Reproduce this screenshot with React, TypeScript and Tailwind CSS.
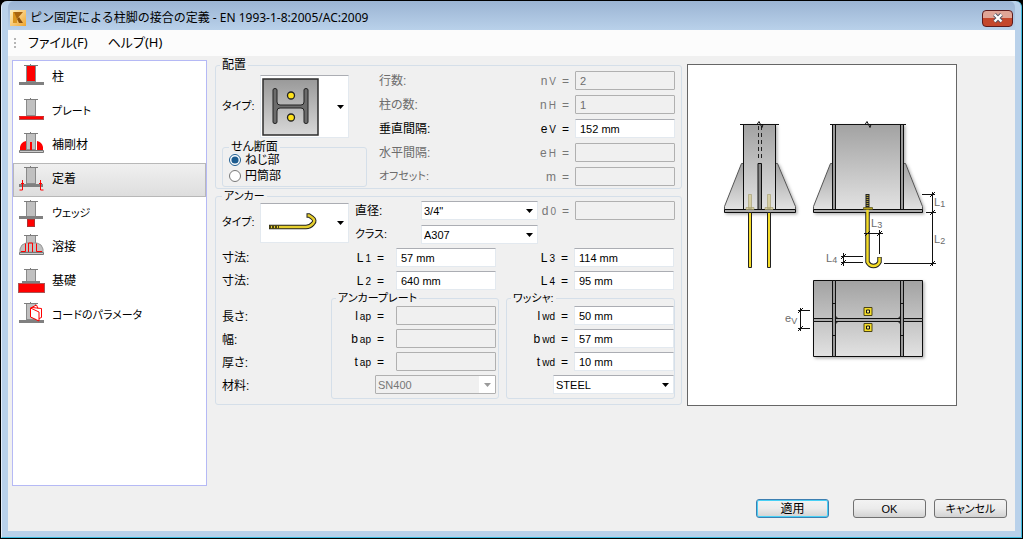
import { useState } from 'react';
import type { ReactNode } from 'react';
import clsx from 'clsx';

const NAV_ITEMS = [
  { id: 'column', label: '柱' },
  { id: 'plate', label: 'プレート', kana: true },
  { id: 'stiffener', label: '補剛材' },
  { id: 'anchorage', label: '定着' },
  { id: 'wedge', label: 'ウェッジ', kana: true },
  { id: 'weld', label: '溶接' },
  { id: 'foundation', label: '基礎' },
  { id: 'code', label: 'コードのパラメータ', kana: true },
];

const LAYOUT_ROWS = [
  { id: 'nv', label: '行数:', base: 'n', sub: 'V', value: '2', disabled: true },
  { id: 'nh', label: '柱の数:', base: 'n', sub: 'H', value: '1', disabled: true },
  { id: 'ev', label: '垂直間隔:', base: 'e', sub: 'V', value: '152 mm', disabled: false },
  { id: 'eh', label: '水平間隔:', base: 'e', sub: 'H', value: '', disabled: true },
  { id: 'm', label: 'オフセット:', base: 'm', sub: '', value: '', disabled: true, kana: true },
];

const NavIcon = ({ id }: { id: string }) => {
  const solid = id === 'column';
  return (
    <svg viewBox="0 0 28 34" className="h-[34px] w-7 shrink-0">
      <rect x="8.500" y="5.500" width="9" height="16" fill={solid ? '#f00' : '#c0c0c0'} stroke="#8a8a8a" />
      <path d="M6 5.500h14M12.500 4v2" stroke="#7d7d7d" fill="none" />
      {id === 'column' && <rect x="1" y="22" width="25" height="3" fill="#808080" />}
      {id === 'plate' && (
        <g>
          <rect x="1" y="22" width="25" height="4" fill="#a55" />
          <rect x="2" y="23" width="23" height="2" fill="#f00" />
          <path d="M1 22.500h25" stroke="#d22" />
        </g>
      )}
      {id === 'stiffener' && (
        <g>
          <path d="M2 22v-3q1-5 6-6v9zM25 22v-3q-1-5-6-6v9z" fill="#f00" />
          <path d="M12 14h2v8h-2z" fill="#f00" />
          <path d="M1.500 22.500h24v2h-24z" fill="#ccc" stroke="#777" />
        </g>
      )}
      {id === 'anchorage' && (
        <g>
          <rect x="1" y="22" width="24" height="3" fill="#808080" />
          <path d="M4.500 18v10h-3M22.500 18v10h3M3 21.500h3M21 21.500h3" stroke="#f00" fill="none" />
        </g>
      )}
      {id === 'wedge' && (
        <g>
          <rect x="1" y="20" width="24" height="3" fill="#808080" />
          <rect x="9.500" y="23.500" width="7" height="7" fill="#f00" stroke="#a33" />
        </g>
      )}
      {id === 'weld' && (
        <g>
          <path d="M2 22v-3q1-5 6-6h11q5 1 6 6v3z" fill="#c0c0c0" stroke="#999" />
          <path d="M3 21.500h4.500v-8M10.500 22v-9h4v9M24 21.500h-5.500v-8" stroke="#f00" fill="none" />
          <path d="M1.500 22.500h24v2h-24z" fill="#ccc" stroke="#777" />
        </g>
      )}
      {id === 'foundation' && (
        <g>
          <rect x="4" y="17" width="18" height="2" fill="#808080" />
          <rect x="0.500" y="19.500" width="26" height="9" fill="#f00" stroke="#a55" />
        </g>
      )}
      {id === 'code' && (
        <g>
          <rect x="1" y="22" width="25" height="3" fill="#808080" />
          <path d="M12.500 10l6-3 2 2 3.500 1v9l-2 2-1 1.500-8.500-4z" fill="#fff" />
          <path d="M12.500 10l6-3 1.500 3.500M12.500 10v9l8.500 4v-9zM14 9.500l9.500 1v9l-2.500 1" fill="none" stroke="#f00" />
        </g>
      )}
    </svg>
  );
};

const Arrow = ({ disabled }: { disabled?: boolean }) => (
  <svg viewBox="0 0 7 4" className={clsx('h-1 w-[7px]', disabled ? 'fill-[#9a9a9a]' : 'fill-black')}>
    <path d="M0 0h7L3.500 4z" />
  </svg>
);

// "L₁ =" style captions, tied to the field they describe
const Sym = ({ base, sub, htmlFor, disabled }: { base: string; sub?: string; htmlFor: string; disabled?: boolean }) => (
  <label
    htmlFor={htmlFor}
    className={clsx('flex flex-1 items-baseline justify-end text-xs', disabled && 'text-[#777]')}
  >
    <span>{base}</span>
    {sub && <span className="ml-0.5 text-[10px]">{sub}</span>}
    <span className="ml-1.5">=</span>
  </label>
);

const Field = ({ id, value = '', disabled }: { id: string; value?: string; disabled?: boolean }) => (
  <input
    id={id}
    type="text"
    defaultValue={value}
    disabled={disabled}
    className={clsx(
      'h-[19px] w-[100px] shrink-0 border px-1 text-[11px] outline-none',
      disabled
        ? 'rounded-[1px] border-[#b0b0b0] bg-[#f0f0f0] text-[#6d6d6d]'
        : 'border-[#e3e9ef] border-t-[#abadb3] bg-white text-black',
    )}
  />
);

interface PickerProps {
  id: string;
  label: string;
  value: string;
  className: string;
  disabled?: boolean;
}

const Picker = ({ id, label, value, className, disabled }: PickerProps) => (
  <div className={clsx('relative h-[19px] shrink-0', className)}>
    <select
      id={id}
      aria-label={label}
      disabled={disabled}
      className={clsx(
        'h-full w-full appearance-none border px-0.5 text-[11px] leading-4 opacity-100 outline-none',
        disabled
          ? 'rounded-[1px] border-[#b0b0b0] bg-[#f0f0f0] text-[#777]'
          : 'border-[#e3e9ef] border-t-[#abadb3] bg-white text-black',
      )}
    >
      <option>{value}</option>
    </select>
    <span
      className={clsx(
        'pointer-events-none absolute inset-y-px right-px flex w-4 items-center justify-center',
        disabled && 'bg-white',
      )}
    >
      <Arrow disabled={disabled} />
    </span>
  </div>
);

interface GroupProps {
  title: string;
  kana?: boolean;
  className?: string;
  children: ReactNode;
}

const Group = ({ title, kana, className, children }: GroupProps) => (
  <fieldset className={clsx('min-w-0 rounded-[3px] border border-[#d5dfe9]', className)}>
    <legend className={clsx('h-2.5 px-0.5 leading-[10px] whitespace-nowrap', kana ? 'text-[11px]' : 'text-xs')}>
      {title}
    </legend>
    {children}
  </fieldset>
);

const SectionPicture = () => (
  <svg viewBox="0 0 58 58" className="size-[58px]">
    <defs>
      <linearGradient id="sec" x1="0" y1="0" x2="0" y2="1">
        <stop offset="0" stopColor="#999" />
        <stop offset="1" stopColor="#d8d8d8" />
      </linearGradient>
    </defs>
    <rect x="1" y="1" width="55" height="56" fill="url(#sec)" stroke="#2c2c2c" strokeWidth="1.500" />
    <path
      d="M11 12q0-1.500 2-1.500t2 1.500v12q0 3 3 3h21q3 0 3-3V12q0-1.500 2-1.500t2 1.500v32q0 1.500-2 1.500t-2-1.500V33q0-3-3-3H18q-3 0-3 3v11q0 1.500-2 1.500T11 44z"
      fill="#6c6c6c"
      stroke="#222"
    />
    <circle cx="29" cy="17.500" r="3.500" fill="#ffe21a" stroke="#222" strokeWidth="1.300" />
    <circle cx="29" cy="39.500" r="3.500" fill="#ffe21a" stroke="#222" strokeWidth="1.300" />
  </svg>
);

const HookPicture = () => (
  <svg viewBox="0 0 58 20" className="h-5 w-[58px]">
    <path d="M7 14h37q4 0 7-3.500 3-3-1-6l-3-2h-2.500" fill="none" stroke="#222" strokeWidth="4.500" />
    <path d="M8 14h36q4 0 7-3.500 3-3-1-6l-3-2h-1.500" fill="none" stroke="#e6cf2e" strokeWidth="2.500" />
    <path d="M7 14h10" stroke="#4a4210" strokeWidth="3" strokeDasharray="2 1" />
  </svg>
);

const PictureButton = ({ label, className, children }: { label: string; className: string; children: ReactNode }) => (
  <button
    type="button"
    aria-label={label}
    aria-haspopup="listbox"
    className={clsx(
      'flex w-[89px] items-center justify-between border border-[#e3e9ef] border-t-[#abadb3] bg-white pr-1 pl-px',
      className,
    )}
  >
    {children}
    <Arrow />
  </button>
);

const Preview = () => (
  <svg viewBox="0 0 268 340" className="h-[340px] w-full">
    <defs>
      <linearGradient id="steel" x1="0" y1="0" x2="0" y2="1">
        <stop offset="0" stopColor="#a2a2a2" />
        <stop offset="1" stopColor="#e2e2e2" />
      </linearGradient>
      <filter id="drop" x="-10%" y="-10%" width="125%" height="125%">
        <feDropShadow dx="1.500" dy="1.500" stdDeviation="1.500" floodOpacity="0.300" />
      </filter>
    </defs>
    <g transform="translate(-688 -65)" fontFamily="Liberation Sans, sans-serif">
      {/* side elevation */}
      <g stroke="#111" filter="url(#drop)">
        <path d="M743.500 163.500h-2l-17 43v3h71v-3l-18-43h-2z" fill="url(#steel)" stroke="#555" />
        <path d="M743.500 124.500h32v85h-32z" fill="url(#steel)" />
        <path d="M724.500 209.500h71v3h-71z" fill="#aaa" />
        <path d="M758 163.500h3.500v46H758z" fill="#888" />
      </g>
      <path d="M758.500 126v34M761.500 126v34" stroke="#222" strokeDasharray="4 3" />
      <path d="M740 124.500h17l2-3 3 6 1-3h16" stroke="#111" fill="none" />
      <g fill="#d6cfa4" stroke="#a39b6c" strokeWidth="0.600">
        <path d="M748.500 194.500h3v14h-3zM767.500 194.500h3v14h-3zM746 207.500h8v2h-8zM765 207.500h8v2h-8z" />
      </g>
      <path d="M748.500 212.500h3v55h-3zM767.500 212.500h3v55h-3z" fill="#f4dc28" stroke="#222" />

      {/* front elevation */}
      <g stroke="#111" filter="url(#drop)">
        <path d="M832.500 163.500h-2l-17 43v3h109v-3l-17-43h-2z" fill="url(#steel)" stroke="#555" />
        <path d="M832.500 124.500h71v85h-71z" fill="url(#steel)" />
        <path d="M832.500 124.500h3v85h-3zM900.500 124.500h3v85h-3z" fill="#999" />
        <path d="M813.500 209.500h109v3h-109z" fill="#aaa" />
      </g>
      <path d="M830 124.500h35l2-3 3 6 1-3h35" stroke="#111" fill="none" />
      <path d="M867.500 212v50q2 4 6 4t6-4v-5" fill="none" stroke="#222" strokeWidth="4.500" />
      <path d="M867.500 208v54q2 4 6 4t6-4v-4.500" fill="none" stroke="#f4dc28" strokeWidth="2.500" />
      <path d="M867.500 194v14" stroke="#222" strokeWidth="4" />
      <path d="M867.500 195v13" stroke="#b3a33c" strokeWidth="2" strokeDasharray="1 1" />
      <path d="M863.500 207.500h9v2h-9z" fill="#b8a520" stroke="#55501c" strokeWidth="0.700" />

      {/* dimension lines */}
      <g stroke="#111" fill="none">
        <path d="M922 194.500h13M926 212.500h10M884 263.500h52M932.500 192v74" />
        <path d="M930 197l5-5M930 215l5-5M930 266l5-5" />
        <path d="M864 233.500h19M879.500 230v24M865 236l5-5M877 236l5-5" />
        <path d="M841 256.500h22M841 262.500h22M843.500 253v13M841 259l5-5M841 265l5-5" />
        <path d="M798 310.500h12M798 328.500h12M800.500 308v23M798 313l5-5M798 331l5-5" />
      </g>
      <g fill="#6a6a6a" fontSize="11">
        <text x="934" y="206">L<tspan fontSize="9" dy="1">1</tspan></text>
        <text x="934" y="243">L<tspan fontSize="9" dy="1">2</tspan></text>
        <text x="871" y="227">L<tspan fontSize="9" dy="1">3</tspan></text>
        <text x="826" y="262">L<tspan fontSize="9" dy="1">4</tspan></text>
        <text x="785" y="322">e<tspan fontSize="9" dy="2">V</tspan></text>
      </g>

      {/* plan */}
      <g stroke="#111">
        <path d="M813.500 280.500h109v76h-109z" fill="url(#steel)" filter="url(#drop)" />
        <path d="M813.500 318.500h109v3h-109z" fill="#aaa" />
        <path d="M832.500 280.500h3v76h-3zM900.500 280.500h3v76h-3z" fill="#999" />
        <path d="M832.500 303.500h3M832.500 335.500h3M900.500 303.500h3M900.500 335.500h3" />
        <path d="M835.500 315.500q0 3 3 3h59q3 0 3-3M835.500 324.500q0-3 3-3h59q3 0 3 3" fill="none" />
        <path d="M864 307.500h8v8h-8zM864 323.500h8v8h-8z" fill="#f4dc28" stroke="#4c4514" />
        <path d="M866.500 310h3v3h-3zM866.500 326h3v3h-3z" fill="#fff07a" />
      </g>
    </g>
  </svg>
);

const BUTTON =
  'h-[19px] w-[73px] rounded-[3px] border bg-linear-to-b from-[#f3f3f3] via-[#ebebeb] via-50% to-[#d2d2d2] leading-4';

export default function App() {
  const [active, setActive] = useState('anchorage');

  return (
    <div className="min-h-screen bg-black p-px font-['Liberation_Sans','Noto_Sans_CJK_JP',sans-serif] text-xs text-black [font-feature-settings:'palt']">
      <div className="flex min-h-[calc(100vh-2px)] flex-col rounded-t-md border-r border-b border-l border-r-[#3bb9dc] border-b-[#3bb9dc] border-l-[#e4eefa] bg-[#b9d1ea] px-1.5 pb-1.5">
        {/* Title bar */}
        <header className="flex h-[29px] items-center gap-1 rounded-t-md bg-linear-to-b from-[#9bb4d3] to-[#b9d1ea] pt-[5px]">
          <svg viewBox="0 0 16 16" className="ml-0.5 size-4">
            <defs>
              <linearGradient id="logo" x1="0" y1="0" x2="1" y2="1">
                <stop offset="0" stopColor="#fff1c4" />
                <stop offset="1" stopColor="#f0a52c" />
              </linearGradient>
            </defs>
            <rect width="16" height="16" fill="url(#logo)" />
            <path d="M3 2h4v11H3z" fill="#d9941f" />
            <path d="M4 2h9L7 9z" fill="#a8640f" />
            <path d="M7 9l2-2 4 6H9z" fill="#8a4f0c" />
          </svg>
          <h1 className="flex-1 font-['Noto_Sans','Noto_Sans_CJK_JP',sans-serif] text-xs font-normal [font-feature-settings:normal]">
            ピン固定による柱脚の接合の定義 - EN 1993-1-8:2005/AC:2009
          </h1>
          <button
            type="button"
            aria-label="閉じる"
            className="mr-0.5 flex h-[17px] w-[31px] items-center justify-center rounded-sm border border-[#5c1a1c] bg-linear-to-b from-[#e0a597] from-50% to-[#c4472c] to-50%"
          >
            <svg viewBox="0 0 12 10" className="h-2.5 w-3">
              <path d="M2.500 1.500l7 7M9.500 1.500l-7 7" stroke="#535666" strokeWidth="4" />
              <path d="M2.500 1.500l7 7M9.500 1.500l-7 7" stroke="#fff" strokeWidth="2.300" />
            </svg>
          </button>
        </header>

        <div className="flex flex-1 flex-col bg-[#f0f0f0]">
          <nav className="flex h-[26px] items-center gap-5 bg-[#fcfcfc] pl-1.5 font-['Noto_Sans','Noto_Sans_CJK_JP',sans-serif] text-[13px]">
            <div className="flex items-center gap-3">
              <svg viewBox="0 0 2 10" className="h-2.5 w-0.5 fill-[#b5b5b5]">
                <path d="M0 0h2v2H0zM0 4h2v2H0zM0 8h2v2H0z" />
              </svg>
              <button type="button">ファイル(F)</button>
            </div>
            <button type="button">ヘルプ(H)</button>
          </nav>

          <main className="flex flex-1 pt-1 pr-[58px] pl-1">
            <ul className="w-[195px] shrink-0 border border-[#b5b9f5] bg-white">
              {NAV_ITEMS.map((item) => (
                <li key={item.id}>
                  <button
                    type="button"
                    onClick={() => setActive(item.id)}
                    className={clsx(
                      'flex h-[34px] w-full items-center gap-1.5 border pb-0.5 pl-1',
                      item.kana && 'text-[11px]',
                      active === item.id
                        ? 'border-[#b8b8b8] bg-linear-to-b from-[#f0f0f0] to-[#dedede]'
                        : 'border-transparent',
                    )}
                  >
                    <NavIcon id={item.id} />
                    {item.label}
                  </button>
                </li>
              ))}
            </ul>

            <div className="ml-2 flex min-w-0 flex-1 flex-col gap-0.5">
              <Group title="配置" className="pt-px pr-1.5 pb-px pl-1">
                <div className="flex">
                  <div className="w-[147px] shrink-0">
                    <div className="flex items-center pt-1 pb-1">
                      <span className="w-10 pl-0.5 text-[11px]">タイプ:</span>
                      <PictureButton label="タイプ" className="h-[63px]">
                        <SectionPicture />
                      </PictureButton>
                    </div>
                    <Group title="せん断面" className="ml-0.5 pb-0.5 pl-1.5">
                      <label className="flex h-4 items-center gap-1">
                        <input type="radio" name="shear" defaultChecked className="size-3 accent-[#1d5c8f]" />
                        ねじ部
                      </label>
                      <label className="flex h-4 items-center gap-1">
                        <input type="radio" name="shear" className="size-3 accent-[#1d5c8f]" />
                        円筒部
                      </label>
                    </Group>
                  </div>
                  <div className="ml-3 flex flex-1 flex-col gap-[5px]">
                    {LAYOUT_ROWS.map((row) => (
                      <div key={row.id} className="flex items-center gap-1.5">
                        <label
                          htmlFor={row.id}
                          className={clsx(row.disabled && 'text-[#6d6d6d]', row.kana && 'text-[11px]')}
                        >
                          {row.label}
                        </label>
                        <Sym base={row.base} sub={row.sub} htmlFor={row.id} disabled={row.disabled} />
                        <Field id={row.id} value={row.value} disabled={row.disabled} />
                      </div>
                    ))}
                  </div>
                </div>
              </Group>

              <Group title="アンカー" kana className="pr-1.5 pb-[5px] pl-1.5">
                <div className="flex">
                  <div className="flex items-center">
                    <span className="w-[38px] text-[11px]">タイプ:</span>
                    <PictureButton label="アンカータイプ" className="h-10">
                      <HookPicture />
                    </PictureButton>
                  </div>
                  <div className="ml-1.5 flex flex-col gap-[5px]">
                    <div className="flex items-center">
                      <label htmlFor="diameter" className="w-[66px]">直径:</label>
                      <Picker id="diameter" label="直径" value={'3/4"'} className="w-[117px]" />
                    </div>
                    <div className="flex items-center">
                      <label htmlFor="grade" className="w-[66px] text-[11px]">クラス:</label>
                      <Picker id="grade" label="クラス" value="A307" className="w-[117px]" />
                    </div>
                  </div>
                  <div className="flex flex-1 items-center gap-1.5 self-start">
                    <Sym base="d" sub="0" htmlFor="d0" disabled />
                    <Field id="d0" disabled />
                  </div>
                </div>

                <div className="mt-1 grid grid-cols-[109px_168px_1fr] gap-y-1">
                  {[
                    ['1', '57 mm', '3', '114 mm'],
                    ['2', '640 mm', '4', '95 mm'],
                  ].map(([a, aValue, b, bValue]) => (
                    <div key={a} className="col-span-3 grid grid-cols-subgrid items-center">
                      <span>寸法:</span>
                      <div className="flex items-center gap-3 pr-[3px]">
                        <Sym base="L" sub={a} htmlFor={`l${a}`} />
                        <Field id={`l${a}`} value={aValue} />
                      </div>
                      <div className="flex items-center gap-1.5 pr-px">
                        <Sym base="L" sub={b} htmlFor={`l${b}`} />
                        <Field id={`l${b}`} value={bValue} />
                      </div>
                    </div>
                  ))}
                </div>

                <div className="mt-[3px] grid grid-cols-[109px_168px_1fr]">
                  <div className="flex flex-col gap-1 pt-[15px]">
                    {['長さ:', '幅:', '厚さ:', '材料:'].map((label) => (
                      <span key={label} className="h-[19px] leading-[19px]">{label}</span>
                    ))}
                  </div>
                  <Group title="アンカープレート" kana className="pt-[3px] pr-0.5 pb-1 pl-1">
                    <div className="flex flex-col gap-1">
                      {['l', 'b', 't'].map((base) => (
                        <div key={base} className="flex items-center gap-3">
                          <Sym base={base} sub="ap" htmlFor={`${base}ap`} />
                          <Field id={`${base}ap`} disabled />
                        </div>
                      ))}
                      <Picker id="apMaterial" label="アンカープレート材料" value="SN400" disabled className="ml-auto w-[121px]" />
                    </div>
                  </Group>
                  <Group title="ワッシャ:" kana className="ml-[7px] pt-[3px] pb-1 pl-1">
                    <div className="flex flex-col gap-1">
                      {[
                        ['l', '50 mm'],
                        ['b', '57 mm'],
                        ['t', '10 mm'],
                      ].map(([base, value]) => (
                        <div key={base} className="flex items-center gap-1.5">
                          <Sym base={base} sub="wd" htmlFor={`${base}wd`} />
                          <Field id={`${base}wd`} value={value} />
                        </div>
                      ))}
                      <Picker id="wdMaterial" label="ワッシャ材料" value="STEEL" className="ml-auto w-[121px]" />
                    </div>
                  </Group>
                </div>
              </Group>
            </div>

            <div className="mt-1 ml-[5px] w-[270px] shrink-0 self-start border border-[#666] bg-white">
              <Preview />
            </div>
          </main>

          <footer className="flex justify-end gap-2 px-2 pt-[13px] pb-[13px]">
            <button
              type="button"
              className={clsx(BUTTON, 'mr-4 border-[#3c7fb1] text-xs shadow-[inset_0_0_0_1px_#48d0f5]')}
            >
              適用
            </button>
            <button type="button" className={clsx(BUTTON, 'border-[#707070] text-[11px]')}>OK</button>
            <button type="button" className={clsx(BUTTON, 'border-[#707070] text-[11px]')}>キャンセル</button>
          </footer>
        </div>
      </div>
    </div>
  );
}
